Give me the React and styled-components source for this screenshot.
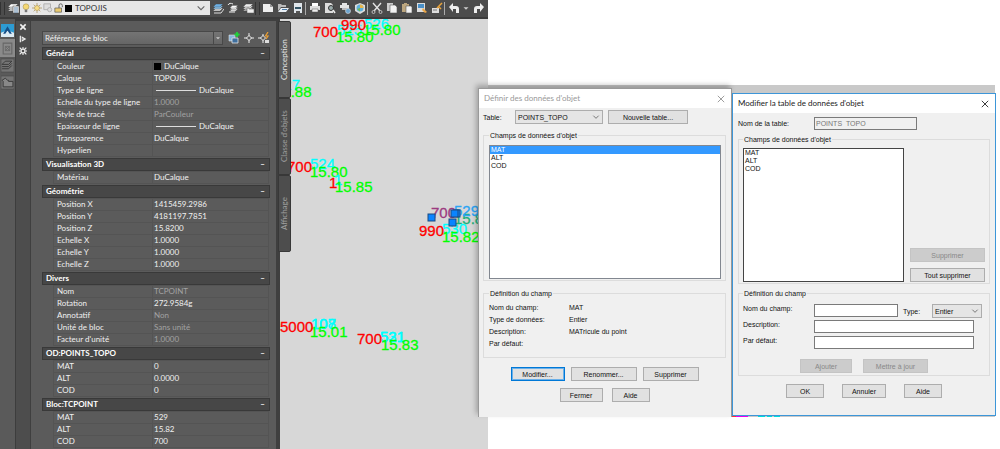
import React from 'react'
import styled, { createGlobalStyle, css } from 'styled-components'

const GlobalStyle = createGlobalStyle`
	* {
		box-sizing: border-box;
	}
	body {
		margin: 0;
		background: #fff;
		font-family: Lato, 'Open Sans', sans-serif;
		font-size: 8px;
		line-height: 12px;
	}
	button,
	select,
	input {
		font: inherit;
		color: inherit;
		margin: 0;
		padding: 0;
		border: 0;
		border-radius: 0;
		background: none;
		appearance: none;
		min-width: 0;
	}
`

const Desktop = styled.main`
	position: relative;
	display: flex;
	align-items: stretch;
	min-height: 100vh;
	overflow: hidden;
`

/* CAD window */

const CadWindow = styled.section`
	flex: 0 0 48.8%;
	min-width: 0;
	display: flex;
	flex-direction: column;
	background: #5b5b5b;
	color: #f0f0f0;
`

const Toolbar = styled.header`
	display: flex;
	align-items: center;
	height: 19px;
	padding-bottom: 1px;
	background: #4c4c4c;
	border-bottom: 2px solid #3c3c3c;
	overflow: hidden;
`

const ToolGroup = styled.div`
	display: flex;
	flex-shrink: 0;
`

const ToolButton = styled.button`
	display: flex;
	align-items: center;
	justify-content: center;
	width: ${props => (props.$narrow ? '10px' : '15px')};
	height: 15px;
	svg {
		width: 12px;
		height: 12px;
	}
`

const Separator = styled.span`
	flex-shrink: 0;
	width: ${props => (props.$wide ? '5px' : '2px')};
	height: 13px;
	border-left: 1px solid ${props => (props.$wide ? '#333' : '#aaa')};
	border-right: ${props => (props.$wide ? '1px solid #333' : '0')};
`

const LayerBox = styled.label`
	display: flex;
	align-items: center;
	flex: 0 0 190px;
	height: 14px;
	padding: 0 3px 0 1px;
	background: #e6e6e6;
	color: #333;
	svg {
		width: 10px;
		height: 10px;
		flex-shrink: 0;
		margin-right: 1px;
	}
	select {
		flex: 1;
		height: 14px;
	}
`

const Swatch = styled.span`
	flex-shrink: 0;
	display: inline-block;
	width: 7px;
	height: 7px;
	margin-right: 3px;
	background: #000;
`

const CadBody = styled.div`
	flex: 1;
	display: flex;
`

const Rail = styled.nav`
	flex: 0 0 15px;
	display: flex;
	flex-direction: column;
	padding-top: 3px;
	background: #5a5a5a;
`

const RailButton = styled.button`
	display: flex;
	align-items: center;
	justify-content: center;
	height: ${props => (props.$wide ? '18px' : '17px')};
	background: ${props => (props.$wide ? '#8a8a8a' : 'transparent')};
	svg {
		width: 13px;
		height: 15px;
	}
`

const Grip = styled.div`
	flex: 0 0 15px;
	display: flex;
	flex-direction: column;
	align-items: center;
	background: #4d4d4d;
	border-left: 1px solid #3d3d3d;
	border-top: 2px solid #3d3d3d;
	button {
		display: flex;
		align-items: center;
		height: 12px;
	}
	svg {
		width: 8px;
		height: 8px;
	}
`

const Palette = styled.div`
	position: relative;
	flex: 0 0 249px;
	padding: 9px 5px 0 11px;
	border: solid #3f3f3f;
	border-width: 2px 4px 0 1px;
	background: #5b5b5b;
`

const PaletteHead = styled.div`
	display: flex;
	align-items: center;
	margin-bottom: 2px;
`

const TypeBox = styled.div`
	display: flex;
	align-items: center;
	flex: 0 0 181px;
	height: 14px;
	margin-right: 3px;
	background: linear-gradient(#747474, #666);
	border: 1px solid #484848;
	select {
		flex: 1;
		height: 12px;
		padding-left: 2px;
	}
	svg {
		width: 9px;
		height: 12px;
		border-left: 1px solid #484848;
	}
`

const Section = styled.section`
	width: 228px;
	margin-bottom: 1px;
`

const SectionHead = styled.h2`
	display: flex;
	justify-content: space-between;
	align-items: center;
	height: 13px;
	margin: 0;
	padding: 0 4px 0 3px;
	background: #474747;
	border: 1px solid #393939;
	font-size: 8px;
	line-height: 11px;
	font-weight: 700;
	color: #fff;
	button {
		font-weight: 700;
		line-height: 11px;
	}
`

const Properties = styled.table`
	width: 216px;
	margin-left: 11px;
	table-layout: fixed;
	border-collapse: collapse;
	border: 1px solid #545454;
	th,
	td {
		height: 12px;
		padding: 0 0 0 3px;
		border-bottom: 1px solid #545454;
		line-height: 11px;
		font-weight: 400;
		text-align: left;
		white-space: nowrap;
	}
	th {
		width: 99px;
	}
	td {
		padding-left: 1px;
		border-left: 1px solid #545454;
	}
`

const Value = styled.span`
	display: flex;
	align-items: center;
	color: ${props => (props.$dim ? '#a2a2a2' : '#f0f0f0')};
`

const Line = styled.span`
	width: 40px;
	height: 1px;
	margin: 0 3px 0 2px;
	background: #ddd;
`

const Tabs = styled.div`
	position: absolute;
	top: 0;
	right: -15px;
	width: 13px;
`

const Tab = styled.button`
	display: block;
	width: 13px;
	height: 77px;
	writing-mode: vertical-rl;
	transform: rotate(180deg);
	text-align: center;
	line-height: 11px;
	border: 1px solid #383838;
	border-radius: 2px 0 0 2px;
	background: ${props => (props.$active ? '#5b5b5b' : '#4d4d4d')};
	color: ${props => (props.$active ? '#e4e4e4' : '#a0a0a0')};
`

const Drawing = styled.svg`
	flex: 1 1 0;
	width: 0;
	min-width: 0;
	background: #d7d7d7;
	font-family: 'Liberation Sans', Arial, sans-serif;
	font-size: 15px;
`

/* Dialogs */

const Backdrop = styled.div`
	flex: 1;
	display: flex;
	align-items: flex-end;
	height: 332px;
	margin: 85px 5px 0 0;
	padding-left: 243px;
	background: #c9c9c9;
	svg {
		width: 52px;
		height: 4px;
	}
`

const Dialog = styled.section`
	position: absolute;
	top: ${props => props.$top};
	left: ${props => props.$left};
	width: ${props => props.$width};
	background: #f0f0f0;
	color: #111;
	font-family: 'Liberation Sans', Arial, sans-serif;
	font-size: 7px;
	line-height: 9px;
	border: 1px solid ${props => (props.$active ? '#3d96d8' : '#999')};
	${props =>
		!props.$active &&
		css`
			border-bottom: 0;
			box-shadow: -2px -3px 5px rgba(0, 0, 0, 0.25);
		`}
`

const TitleBar = styled.header`
	display: flex;
	align-items: center;
	justify-content: space-between;
	height: 19px;
	padding: 0 6px 0 5px;
	background: #fff;
	color: ${props => (props.$active ? '#222' : '#999')};
	h1 {
		margin: 0;
		font-family: Lato, 'Open Sans', sans-serif;
		font-size: 8px;
		font-weight: 400;
	}
	button {
		display: flex;
	}
	svg {
		width: 8px;
		height: 8px;
	}
`

const DialogBody = styled.div`
	padding: ${props => props.$pad};
`

const Row = styled.div`
	display: flex;
	align-items: ${props => props.$align || 'center'};
	justify-content: ${props => props.$justify || 'flex-start'};
	gap: ${props => props.$gap || '0'};
	margin-bottom: ${props => props.$after || '0'};
`

const Label = styled.label`
	flex: 0 0 ${props => props.$width};
`

const Button = styled.button`
	width: ${props => props.$width};
	height: 14px;
	background: ${props => (props.disabled ? '#ccc' : '#e1e1e1')};
	border: 1px solid ${props => (props.disabled ? '#c4c4c4' : '#adadad')};
	color: ${props => (props.disabled ? '#888' : '#111')};
	text-align: center;
	${props =>
		props.$default &&
		css`
			border: 1px solid #0078d7;
			box-shadow: inset 0 0 0 1px #6cb0e8;
		`}
`

const DropDown = styled.span`
	display: flex;
	align-items: center;
	width: ${props => props.$width};
	height: 14px;
	padding: 0 2px;
	background: #e5e5e5;
	border: 1px solid #adadad;
	select {
		flex: 1;
		height: 12px;
	}
	svg {
		width: 8px;
		height: 8px;
		flex-shrink: 0;
	}
`

const TextInput = styled.input`
	width: ${props => props.$width};
	height: 13px;
	padding: 0 1px;
	background: ${props => (props.disabled ? '#f0f0f0' : '#fff')};
	border: 1px solid #7a7a7a;
	color: ${props => (props.disabled ? '#777' : '#111')};
`

const Group = styled.fieldset`
	min-width: 0;
	height: ${props => props.$height};
	margin: 0 0 ${props => props.$after || '0'};
	padding: ${props => props.$pad || '0 4px 0 5px'};
	border: 1px solid #dcdcdc;
	legend {
		height: 9px;
		margin: 0;
		padding: 0 1px;
	}
`

const ListBox = styled.ul`
	flex: ${props => props.$flex || '1'};
	height: 134px;
	margin: 0;
	padding: 0;
	list-style: none;
	background: #fff;
	border: 1px solid ${props => (props.$dark ? '#444' : '#828790')};
`

const Option = styled.li`
	height: 8px;
	padding-left: 1px;
	line-height: 8px;
	background: ${props => (props['aria-selected'] ? '#3399ff' : 'transparent')};
	color: ${props => (props['aria-selected'] ? '#fff' : '#111')};
`

const Details = styled.dl`
	display: grid;
	grid-template-columns: 80px 1fr;
	row-gap: 3px;
	margin: 0;
	dd {
		margin: 0;
	}
`

/* Icons */

const Icon = ({ children, box = 12 }) => (
	<svg viewBox={`0 0 ${box} ${box}`} aria-hidden='true'>
		{children}
	</svg>
)

const Sheets = ({ colors }) =>
	colors.map((color, i) => (
		<path
			key={i}
			d={`M1 ${9 - i * 2}L4 ${6 - i * 2}H11L8 ${9 - i * 2}Z`}
			fill={color}
			stroke='#444'
			strokeWidth='.4'
		/>
	))

const icons = {
	layers: (
		<Icon>
			<Sheets colors={['#ddd', '#ddd', '#fff']} />
			<rect x='6' y='4' width='6' height='7' fill='#eee' stroke='#444' strokeWidth='.5' />
			<path d='M7 6h4M7 8h4M7 10h4' stroke='#4779a8' strokeWidth='.8' />
		</Icon>
	),
	layerBlue: (
		<Icon>
			<Sheets colors={['#ddd', '#8cc2ea', '#6cafe4']} />
			<path d='M2 11h7l3-4' stroke='#ddd' fill='none' />
		</Icon>
	),
	layerBack: (
		<Icon>
			<g transform='translate(2 2) scale(.8)'>
				<Sheets colors={['#eee', '#eee', '#fff']} />
			</g>
			<path d='M1 3c1-2 3-2 5-1M2 10h6' stroke='#eee' fill='none' />
		</Icon>
	),
	layerState: (
		<Icon>
			<Sheets colors={['#bbb', '#ddd', '#eee']} />
			<path d='M5 6h2v1h5v4H5z' fill='#eee' stroke='#555' strokeWidth='.5' />
		</Icon>
	),
	fresh: (
		<Icon>
			<path d='M1 2h7l3 3v5H1z' fill='#eee' />
			<path d='M8 2v3h3z' fill='#999' />
		</Icon>
	),
	open: (
		<Icon>
			<path d='M1 2h3l1 1h4v2H4L1 9z' fill='#bbb' />
			<path d='M4 6h8L9 10H1z' fill='#e8eef4' />
			<path d='M5 7.500h5' stroke='#4779a8' />
		</Icon>
	),
	save: (
		<Icon>
			<path d='M2 1h8v10H2z' fill='#dfe5ea' />
			<path d='M3 5h6v2H3z' fill='#356' />
			<path d='M4 9h4v2H4z' fill='#555' />
		</Icon>
	),
	print: (
		<Icon>
			<path d='M3 1h6v3H3z' fill='#fff' />
			<path d='M1 4h10v4H1z' fill='#ddd' />
			<path d='M3 7h6v3H3z' fill='#eee' stroke='#555' strokeWidth='.5' />
		</Icon>
	),
	preview: (
		<Icon>
			<path d='M1 1h6l2 2v8H1z' fill='#ddd' />
			<circle cx='7' cy='6' r='2.500' fill='#9aa' stroke='#333' />
			<path d='M9 8l2 3' stroke='#eee' strokeWidth='1.500' />
		</Icon>
	),
	publish: (
		<Icon>
			<path d='M3 1h5v2H3zM1 3h9v3H1z' fill='#e4e4e4' />
			<path d='M3 6h7v2H3z' fill='#bbb' />
			<circle cx='9' cy='9' r='2.500' fill='#6da5d0' stroke='#ddd' strokeWidth='.6' />
		</Icon>
	),
	globe: (
		<Icon>
			<path d='M1 3l5-2 5 2v6l-5 3-5-3z' fill='#ddd' />
			<circle cx='6' cy='6' r='3.500' fill='#5eb0dc' />
			<path d='M6 2.500A3.500 3.500 0 0 1 9.500 6H6z' fill='#e8b64c' />
			<path d='M3 7l3-1v3.500z' fill='#70b850' />
		</Icon>
	),
	cut: (
		<Icon>
			<path d='M2 1l7 8M10 1L3 9' stroke='#e4e4e4' strokeWidth='1.400' />
			<circle cx='2.500' cy='10' r='1.500' fill='none' stroke='#bbb' />
			<circle cx='9.500' cy='10' r='1.500' fill='none' stroke='#bbb' />
		</Icon>
	),
	copy: (
		<Icon>
			<path d='M1 1h6v8H1z' fill='#ccc' />
			<path d='M4 3h5l2 2v6H4z' fill='#f2f2f2' stroke='#555' strokeWidth='.6' />
		</Icon>
	),
	paste: (
		<Icon>
			<path d='M1 2h2V1h3v1h2v8H1z' fill='#bca67f' />
			<path d='M5 4h5l1 1v6H5z' fill='#f2f2f2' stroke='#555' strokeWidth='.6' />
		</Icon>
	),
	match: (
		<Icon>
			<path d='M1 1h8v9H1z' fill='#ddd' />
			<path d='M2 2h6v4H2z' fill='#4a90c8' />
			<path d='M7 6l4 4-2 1-3-3z' fill='#eaa648' />
		</Icon>
	),
	brush: (
		<Icon>
			<path d='M1 6h7v5H1z' fill='#ddd' />
			<path d='M11 1L6 6M7 4l3 3' stroke='#e8a33c' strokeWidth='1.500' />
			<path d='M2 8h4' stroke='#777' />
		</Icon>
	),
	undo: (
		<Icon>
			<path d='M1 5l4-4v3h3q3 0 3 3v4H8V7H5v3z' fill='#eee' />
		</Icon>
	),
	redo: (
		<Icon>
			<path d='M11 5L7 1v3H4Q1 4 1 7v4h3V7h3v3z' fill='#eee' />
		</Icon>
	),
	down: (
		<Icon>
			<path d='M3 5h6L6 8z' fill='#ccc' />
		</Icon>
	),
	chevron: (
		<Icon>
			<path d='M2 4l4 4 4-4' fill='none' stroke='#666' strokeWidth='1.300' />
		</Icon>
	),
	bulb: (
		<Icon>
			<circle cx='6' cy='4.500' r='3.500' fill='#f5d873' stroke='#9a8a4a' strokeWidth='.6' />
			<path d='M4.500 8h3v3h-3z' fill='#777' />
		</Icon>
	),
	sun: (
		<Icon>
			<path d='M6 0v12M0 6h12M2 2l8 8M10 2l-8 8' stroke='#a58a48' strokeWidth='.8' />
			<circle cx='6' cy='6' r='3' fill='#f6dd86' stroke='#a58a48' strokeWidth='.6' />
		</Icon>
	),
	viewport: (
		<Icon>
			<path d='M1 1h8v7H1z' fill='#ddd' stroke='#aaa' />
			<circle cx='8' cy='8' r='2.500' fill='#ddd' stroke='#aaa' />
		</Icon>
	),
	unlock: (
		<Icon>
			<path d='M6 6V3q0-2 2-2t2 2v2' fill='none' stroke='#666' strokeWidth='1.200' />
			<path d='M1 6h8v5H1z' fill='#eacb70' stroke='#555' strokeWidth='.8' />
		</Icon>
	),
	close: (
		<Icon>
			<path d='M2 2l8 8M10 2l-8 8' stroke='#f2f2f2' strokeWidth='2.400' />
		</Icon>
	),
	pin: (
		<Icon>
			<path d='M2 1v10' stroke='#eee' strokeWidth='1.800' />
			<path d='M4 2l7 4-7 4z' fill='#eee' />
			<path d='M5 5l2 1-2 1z' fill='#4d4d4d' />
		</Icon>
	),
	gear: (
		<Icon>
			<circle cx='6' cy='6' r='3' fill='none' stroke='#eee' strokeWidth='2' />
			<path
				d='M6 0v2M6 10v2M0 6h2M10 6h2M1 1l2 2M9 9l2 2M11 1L9 3M1 11l2-2'
				stroke='#eee'
				strokeWidth='1.600'
			/>
		</Icon>
	),
	select: (
		<Icon>
			<path d='M1 3h6v6H1z' fill='#87b5dc' stroke='#e4e4e4' strokeWidth='.6' />
			<path d='M4 6h6v5H4z' fill='#3f6f9e' stroke='#e4e4e4' strokeWidth='.8' />
			<path d='M9 0v5M6.500 2.500h5' stroke='#1fd33a' strokeWidth='1.800' />
		</Icon>
	),
	pick: (
		<Icon>
			<path d='M6 1v3M6 8v3M1 6h3M8 6h3' stroke='#eee' />
			<path d='M6 3.500L8.500 6 6 8.500 3.500 6z' fill='none' stroke='#eee' />
		</Icon>
	),
	quick: (
		<Icon>
			<path d='M5 2v2M5 8v3M0 6h3' stroke='#eee' />
			<path d='M5 3.500L7.500 6 5 8.500 2.500 6z' fill='none' stroke='#eee' />
			<path d='M10 0L7.500 4H10L8 7' fill='none' stroke='#efa030' strokeWidth='1.200' />
			<path d='M7 8h4v3H7z' fill='#ddd' />
		</Icon>
	),
	logo: (
		<Icon>
			<path d='M0 0h12v12H0z' fill='#2d9bd3' />
			<path d='M0 8q6-3 12 0v4H0z' fill='#dcebf4' />
			<path d='M2 9L6 2l4 7H8L6 6 4 9z' fill='#164f88' />
		</Icon>
	),
	railBlock: (
		<Icon>
			<path d='M2 1h8v10H2z' fill='none' stroke='#666' />
			<path d='M4 4h4v4H4zM4 4l4 4M8 4L4 8' fill='none' stroke='#666' strokeWidth='.8' />
		</Icon>
	),
	railLayers: (
		<Icon>
			<path d='M0 0h12v12H0z' fill='#757575' stroke='#444' strokeWidth='.5' />
			<path
				d='M1 5l3-3h6L7 5zM1 7h6l3-3M1 9h6l3-3'
				fill='none'
				stroke='#333'
				strokeWidth='.8'
			/>
		</Icon>
	),
	railHome: (
		<Icon>
			<path d='M0 0h12v12H0z' fill='#757575' stroke='#444' strokeWidth='.5' />
			<path d='M1 4l3-2 2 2h1v1h4v5H2V5z' fill='#888' stroke='#333' strokeWidth='.8' />
		</Icon>
	)
}

const Cross = ({ color }) => (
	<svg viewBox='0 0 10 10' aria-hidden='true'>
		<path d='M1 1l8 8M9 1L1 9' stroke={color} strokeWidth='1.200' />
	</svg>
)

/* Data */

const toolGroups = [
	[['layerBlue', 'Calque courant'], ['layerBack', 'Calque précédent'], ['layerState', 'États']],
	[['fresh', 'Nouveau'], ['open', 'Ouvrir'], ['save', 'Enregistrer']],
	[['print', 'Tracer'], ['preview', 'Aperçu'], ['publish', 'Publier'], ['globe', 'Web']],
	[
		['cut', 'Couper'],
		['copy', 'Copier'],
		['paste', 'Coller'],
		['match', 'Copier les propriétés'],
		['brush', 'Editeur de blocs']
	],
	[['undo', 'Annuler'], ['down', 'Historique'], ['redo', 'Rétablir']]
]

const sections = [
	{
		title: 'Général',
		rows: [
			['Couleur', 'DuCalque', 'swatch'],
			['Calque', 'TOPOJIS'],
			['Type de ligne', 'DuCalque', 'line'],
			['Echelle du type de ligne', '1.0000', 'dim'],
			['Style de tracé', 'ParCouleur', 'dim'],
			['Epaisseur de ligne', 'DuCalque', 'line'],
			['Transparence', 'DuCalque'],
			['Hyperlien', '']
		]
	},
	{ title: 'Visualisation 3D', rows: [['Matériau', 'DuCalque']] },
	{
		title: 'Géométrie',
		rows: [
			['Position X', '1415459.2986'],
			['Position Y', '4181197.7851'],
			['Position Z', '15.8200'],
			['Echelle X', '1.0000'],
			['Echelle Y', '1.0000'],
			['Echelle Z', '1.0000']
		]
	},
	{
		title: 'Divers',
		rows: [
			['Nom', 'TCPOINT', 'dim'],
			['Rotation', '272.9584g'],
			['Annotatif', 'Non', 'dim'],
			['Unité de bloc', 'Sans unité', 'dim'],
			["Facteur d'unité", '1.0000', 'dim']
		]
	},
	{
		title: 'OD:POINTS_TOPO',
		rows: [
			['MAT', '0'],
			['ALT', '0.0000'],
			['COD', '0']
		]
	},
	{
		title: 'Bloc:TCPOINT',
		rows: [
			['MAT', '529'],
			['ALT', '15.82'],
			['COD', '700']
		]
	}
]

const RED = '#ff0000'
const CYAN = '#00ffff'
const GREEN = '#00ff00'

const labels = [
	[57, 16, '525', CYAN],
	[84, 10, '526', CYAN],
	[56, 23, '15.80', GREEN],
	[83, 16, '15.80', GREEN],
	[33, 18, '700', RED],
	[61, 11, '990', RED],
	[-5, 71, '527', CYAN],
	[-6, 78, '15.88', GREEN],
	[30, 150, '524', CYAN],
	[30, 158, '15.80', GREEN],
	[7, 153, '700', RED],
	[54, 166, '1', CYAN],
	[55, 173, '15.85', GREEN],
	[49, 169, '1', RED],
	[151, 199, '700', '#9c3a80'],
	[174, 205, '15.82', '#20b078'],
	[174, 197, '529', '#2aa4f4'],
	[162, 215, '530', CYAN],
	[162, 223, '15.82', GREEN],
	[139, 217, '990', RED],
	[31, 310, '108', CYAN],
	[31, 310, '107', CYAN],
	[30, 318, '15.01', GREEN],
	[0, 313, '5000', RED],
	[100, 323, '521', CYAN],
	[100, 323, '531', CYAN],
	[101, 331, '15.83', GREEN],
	[77, 325, '700', RED]
]

const grips = [
	[148, 195],
	[173, 191],
	[171, 191],
	[169, 200]
]

const fields = ['MAT', 'ALT', 'COD']

const Tool = ({ icon, label }) => (
	<ToolButton type='button' aria-label={label} $narrow={icon === 'down'}>
		{icons[icon]}
	</ToolButton>
)

const PropertySection = ({ title, rows }) => (
	<Section>
		<SectionHead>
			{title}
			<button type='button' aria-label={`Réduire ${title}`}>
				–
			</button>
		</SectionHead>
		<Properties>
			<tbody>
				{rows.map(([name, value, kind]) => (
					<tr key={name}>
						<th scope='row'>{name}</th>
						<td>
							<Value $dim={kind === 'dim'}>
								{kind === 'swatch' && <Swatch />}
								{kind === 'line' && <Line />}
								{value}
							</Value>
						</td>
					</tr>
				))}
			</tbody>
		</Properties>
	</Section>
)

const FieldList = props => (
	<ListBox role='listbox' aria-label="Champs de données d'objet" {...props}>
		{fields.map(field => (
			<Option key={field} role='option' aria-selected={field === props.$selected}>
				{field}
			</Option>
		))}
	</ListBox>
)

const Cad = () => (
	<CadWindow>
		<Toolbar>
			<Separator $wide />
			<Tool icon='layers' label='Gestionnaire de calques' />
			<LayerBox>
				{icons.bulb}
				{icons.sun}
				{icons.viewport}
				{icons.unlock}
				<Swatch />
				<select aria-label='Calque'>
					<option>TOPOJIS</option>
				</select>
				{icons.chevron}
			</LayerBox>
			{toolGroups.map((group, i) => (
				<React.Fragment key={i}>
					{i > 0 && <Separator $wide={i === 1} />}
					<ToolGroup>
						{group.map(([icon, label]) => (
							<Tool key={icon} icon={icon} label={label} />
						))}
					</ToolGroup>
				</React.Fragment>
			))}
		</Toolbar>
		<CadBody>
			<Rail>
				<RailButton aria-label='Accueil'>{icons.logo}</RailButton>
				<RailButton aria-label='Blocs' $wide>
					{icons.railBlock}
				</RailButton>
				<RailButton aria-label='Calques'>{icons.railLayers}</RailButton>
				<RailButton aria-label='Projet'>{icons.railHome}</RailButton>
			</Rail>
			<Grip>
				<button aria-label='Fermer la palette'>{icons.close}</button>
				<button aria-label='Masquer'>{icons.pin}</button>
				<button aria-label='Options'>{icons.gear}</button>
			</Grip>
			<Palette>
				<PaletteHead>
					<TypeBox>
						<select aria-label="Type d'objet">
							<option>Référence de bloc</option>
						</select>
						{icons.down}
					</TypeBox>
					<Tool icon='select' label='Sélectionner' />
					<Tool icon='pick' label='Pointer' />
					<Tool icon='quick' label='Sélection rapide' />
				</PaletteHead>
				{sections.map(section => (
					<PropertySection key={section.title} {...section} />
				))}
				<Tabs>
					<Tab $active>Conception</Tab>
					<Tab>Classe d'objets</Tab>
					<Tab>Affichage</Tab>
				</Tabs>
			</Palette>
			<Drawing>
				{labels.map(([x, y, text, color], i) => (
					<text key={i} x={x} y={y} fill={color} stroke={color} strokeWidth='.3'>
						{text}
					</text>
				))}
				{grips.map(([x, y], i) => (
					<rect key={i} x={x} y={y} width='7' height='7' fill='#0a84ff' stroke='#1d4a80' />
				))}
			</Drawing>
		</CadBody>
	</CadWindow>
)

const DefineDialog = () => (
	<Dialog $top='88px' $left='47.8%' $width='25.4%'>
		<TitleBar>
			<h1>Définir des données d'objet</h1>
			<button aria-label='Fermer'>
				<Cross color='#999' />
			</button>
		</TitleBar>
		<DialogBody $pad='2px 5px 15px 4px'>
			<Row $after='7px'>
				<Label htmlFor='table' $width='32px'>
					Table:
				</Label>
				<DropDown $width='88px'>
					<select id='table'>
						<option>POINTS_TOPO</option>
					</select>
					{icons.chevron}
				</DropDown>
				<Row $gap='5px'>
					<span />
					<Button $width='80px'>Nouvelle table...</Button>
				</Row>
			</Row>
			<Group $height='150px' $pad='5px 4px 0 5px' $after='8px'>
				<legend>Champs de données d'objet</legend>
				<FieldList $selected='MAT' />
			</Group>
			<Group $height='69px' $after='9px'>
				<legend>Définition du champ</legend>
				<Row $after='5px' />
				<Details>
					<dt>Nom du champ:</dt>
					<dd>MAT</dd>
					<dt>Type de données:</dt>
					<dd>Entier</dd>
					<dt>Description:</dt>
					<dd>MATricule du point</dd>
					<dt>Par défaut:</dt>
					<dd />
				</Details>
			</Group>
			<Row $justify='center' $gap='6px' $after='7px'>
				<Button $width='54px' $default>
					Modifier...
				</Button>
				<Button $width='66px'>Renommer...</Button>
				<Button $width='56px'>Supprimer</Button>
			</Row>
			<Row $justify='center' $gap='9px'>
				<Button $width='43px'>Fermer</Button>
				<Button $width='38px'>Aide</Button>
			</Row>
		</DialogBody>
	</Dialog>
)

const EditDialog = () => (
	<Dialog $top='93px' $left='73.2%' $width='26.4%' $active>
		<TitleBar $active>
			<h1>Modifier la table de données d'objet</h1>
			<button aria-label='Fermer'>
				<Cross color='#333' />
			</button>
		</TitleBar>
		<DialogBody $pad='4px 5px 17px 5px'>
			<Row $after='5px'>
				<Label htmlFor='name' $width='76px'>
					Nom de la table:
				</Label>
				<TextInput id='name' $width='103px' disabled defaultValue='POINTS_TOPO' />
			</Row>
			<Group $height='149px' $pad='4px 4px 0 4px' $after='5px'>
				<legend>Champs de données d'objet</legend>
				<Row $gap='6px' $align='flex-end'>
					<FieldList $flex='0 0 161px' $dark />
					<div>
						<Row $after='6px'>
							<Button $width='75px' disabled>
								Supprimer
							</Button>
						</Row>
						<Button $width='75px'>Tout supprimer</Button>
					</div>
				</Row>
			</Group>
			<Group $height='87px' $pad='0 4px 0 4px' $after='8px'>
				<legend>Définition du champ</legend>
				<Row $after='6px' />
				<Row $align='flex-start' $after='2px'>
					<Label htmlFor='field' $width='71px'>
						Nom du champ:
					</Label>
					<TextInput id='field' $width='84px' />
					<Row $gap='5px'>
						<span />
						<Label htmlFor='type' $width='24px'>
							Type:
						</Label>
						<DropDown $width='50px'>
							<select id='type'>
								<option>Entier</option>
							</select>
							{icons.chevron}
						</DropDown>
					</Row>
				</Row>
				<Row $align='flex-start' $after='3px'>
					<Label htmlFor='description' $width='71px'>
						Description:
					</Label>
					<TextInput id='description' $width='160px' />
				</Row>
				<Row $align='flex-start' $after='10px'>
					<Label htmlFor='fallback' $width='71px'>
						Par défaut:
					</Label>
					<TextInput id='fallback' $width='160px' />
				</Row>
				<Row $justify='center' $gap='11px'>
					<Button $width='52px' disabled>
						Ajouter
					</Button>
					<Button $width='65px' disabled>
						Mettre à jour
					</Button>
				</Row>
			</Group>
			<Row $justify='center' $gap='18px'>
				<Button $width='38px'>OK</Button>
				<Button $width='44px'>Annuler</Button>
				<Button $width='38px'>Aide</Button>
			</Row>
		</DialogBody>
	</Dialog>
)

const App = () => (
	<>
		<GlobalStyle />
		<Desktop>
			<Cad />
			<Backdrop>
				<svg viewBox='0 0 52 4' aria-hidden='true'>
					<path d='M1 3h4' stroke='#f33' strokeWidth='2' />
					<path d='M5 3h12' stroke='#e0e' strokeWidth='2' />
					<path d='M27 3h7M36 3h5M43 3h6' stroke='#0dd' strokeWidth='2' />
				</svg>
			</Backdrop>
			<DefineDialog />
			<EditDialog />
		</Desktop>
	</>
)

export default App
